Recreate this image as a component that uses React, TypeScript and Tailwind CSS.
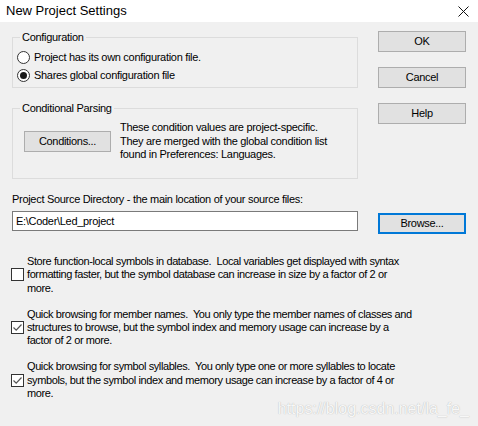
import React from "react";

const ui = { fontFamily: '"Liberation Sans", Arial, sans-serif' };

function Radio({ checked }: { checked?: boolean }) {
  return (
    <span className="flex h-[13px] w-[13px] shrink-0 items-center justify-center rounded-full border border-[#333] bg-white">
      {checked ? <span className="h-[7px] w-[7px] rounded-full bg-[#1a1a1a]" /> : null}
    </span>
  );
}

function Check({ checked }: { checked?: boolean }) {
  return (
    <span className="flex h-[13px] w-[13px] shrink-0 items-center justify-center border border-[#333] bg-white">
      {checked ? (
        <svg width="11" height="11" viewBox="0 0 11 11">
          <path d="M1.5 5.5 L4.2 8.2 L9.5 2.5" fill="none" stroke="#555" strokeWidth="1.2" />
        </svg>
      ) : null}
    </span>
  );
}

function Btn({ children, focused }: { children: React.ReactNode; focused?: boolean }) {
  return (
    <button
      type="button"
      className={
        focused
          ? "flex h-[21px] w-[88px] items-center justify-center border-2 border-[#0078d7] bg-[#e1e1e1] text-[11px] text-black"
          : "flex h-[21px] w-[88px] items-center justify-center border border-[#adadad] bg-[#e1e1e1] text-[11px] text-black"
      }
    >
      {children}
    </button>
  );
}

const options = [
  {
    checked: false,
    lines: [
      "Store function-local symbols in database.  Local variables get displayed with syntax",
      "formatting faster, but the symbol database can increase in size by a factor of 2 or",
      "more.",
    ],
  },
  {
    checked: true,
    lines: [
      "Quick browsing for member names.  You only type the member names of classes and",
      "structures to browse, but the symbol index and memory usage can increase by a",
      "factor of 2 or more.",
    ],
  },
  {
    checked: true,
    lines: [
      "Quick browsing for symbol syllables.  You only type one or more syllables to locate",
      "symbols, but the symbol index and memory usage can increase by a factor of 4 or",
      "more.",
    ],
  },
];

export default function App() {
  return (
    <div
      className="flex h-[426px] w-[478px] flex-col bg-[#f0f0f0] text-[11px] tracking-[-0.3px] text-black"
      style={ui}
    >
      <div className="flex h-[23px] items-center justify-between bg-white pl-[6px] pr-[9px]">
        <span className="text-[13px] tracking-normal">New Project Settings</span>
        <svg width="11" height="11" viewBox="0 0 11 11">
          <path d="M0.5 0.5 L10.5 10.5 M10.5 0.5 L0.5 10.5" stroke="#111" strokeWidth="1" />
        </svg>
      </div>

      <div className="flex gap-[20px] pl-[12px] pt-[9px]">
        <div className="flex w-[346px] flex-col">
          <fieldset className="h-[57px] border border-[#dcdcdc] px-[4px]">
            <legend className="ml-[3px] px-[2px] leading-[13px]">Configuration</legend>
            <div className="mt-[7px] flex flex-col gap-[5px]">
              <label className="flex items-center gap-[4px] leading-[13px]">
                <Radio />
                Project has its own configuration file.
              </label>
              <label className="flex items-center gap-[4px] leading-[13px]">
                <Radio checked />
                Shares global configuration file
              </label>
            </div>
          </fieldset>

          <fieldset className="mt-[14px] h-[77px] border border-[#dcdcdc] pl-[11px]">
            <legend className="ml-[-4px] px-[2px] leading-[13px]">Conditional Parsing</legend>
            <div className="mt-[6px] flex gap-[9px]">
              <button
                type="button"
                className="mt-[10px] flex h-[21px] w-[87px] items-center justify-center border border-[#adadad] bg-[#e1e1e1]"
              >
                Conditions...
              </button>
              <div className="leading-[13.5px]">
                <div>These condition values are project-specific.</div>
                <div>They are merged with the global condition list</div>
                <div>found in Preferences: Languages.</div>
              </div>
            </div>
          </fieldset>
        </div>

        <div className="flex flex-col gap-[15px]">
          <Btn>OK</Btn>
          <Btn>Cancel</Btn>
          <Btn>Help</Btn>
        </div>
      </div>

      <div className="mt-[14px] pl-[12px] leading-[13px]">
        Project Source Directory - the main location of your source files:
      </div>
      <div className="mt-[5px] flex items-start gap-[20px] pl-[12px]">
        <div className="flex h-[20px] w-[346px] items-center border border-[#7a7a7a] bg-white pl-[3px]">
          E:\Coder\Led_project
        </div>
        <div className="mt-[2px]">
          <Btn focused>Browse...</Btn>
        </div>
      </div>

      <div className="mt-[21px] flex flex-col gap-[13px] pl-[11px] tracking-[-0.4px]">
        {options.map((o, i) => (
          <div key={i} className="flex items-center gap-[3px]">
            <Check checked={o.checked} />
            <div className="leading-[13.2px]">
              {o.lines.map((l) => (
                <div key={l} className="whitespace-pre">
                  {l}
                </div>
              ))}
            </div>
          </div>
        ))}
      </div>

      <div
        className="mb-[8px] mt-auto self-end pr-[9px] text-[16px] leading-[18px] tracking-normal text-[#f7f7f7]"
        style={{ textShadow: "0 0 1px #aaaaaa" }}
      >
        https://blog.csdn.net/la_fe_
      </div>
    </div>
  );
}
